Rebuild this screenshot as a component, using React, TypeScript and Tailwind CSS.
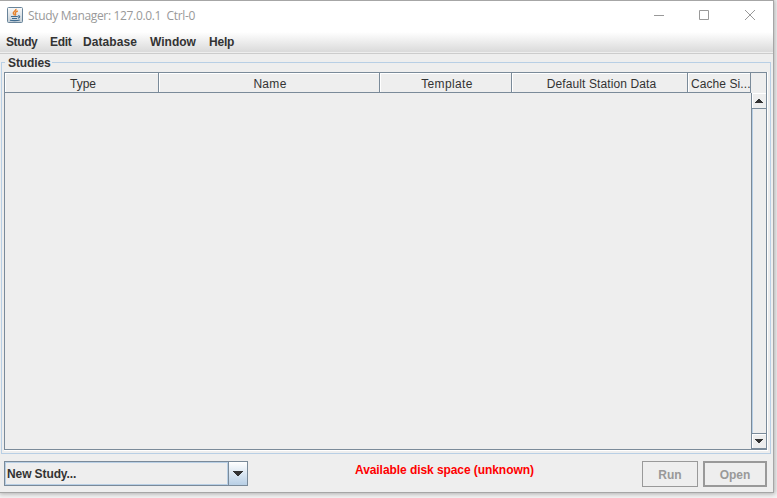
import React from "react";

const menus = [
  { label: "Study", cls: "w-[44px] tracking-[-0.4px]" },
  { label: "Edit", cls: "w-[33px] tracking-[-0.3px]" },
  { label: "Database", cls: "w-[67px] tracking-[0.08px]" },
  { label: "Window", cls: "w-[59px]" },
  { label: "Help", cls: "w-[40px] tracking-[-0.2px]" },
];

const columns = [
  { label: "Type", cls: "w-[154px]", text: "pl-[3px]" },
  { label: "Name", cls: "w-[221px]", text: "pl-[2px] tracking-[0.3px]" },
  { label: "Template", cls: "w-[132px]", text: "pl-[3px] tracking-[0.35px]" },
  { label: "Default Station Data", cls: "w-[176px]", text: "pl-[4px] tracking-[0.1px]" },
  { label: "Cache Si...", cls: "w-[63px]", text: "pl-[3px] tracking-[0.08px]" },
];

function JavaIcon() {
  return (
    <svg width="16" height="16" viewBox="0 0 16 16" className="block shrink-0">
      <defs>
        <linearGradient id="tile" x1="0" y1="0" x2="0" y2="1">
          <stop offset="0" stopColor="#fafafa" />
          <stop offset="1" stopColor="#c3ced6" />
        </linearGradient>
      </defs>
      <rect x="0.5" y="0.5" width="15" height="15" rx="1" fill="url(#tile)" stroke="#69849a" />
      <path d="M9 1.8C9.4 4 5.7 4.5 6.3 6.3C6.5 7 7.3 7.5 7.4 8.4M10.8 4C8.5 4.9 7.7 5.8 8.6 7C8.9 7.5 8.6 8 8 8.4" fill="none" stroke="#e8822a" strokeWidth="1.4" />
      <path d="M4 9.5H10.8M5 11.5H10M11 9C13.3 8.4 13.2 10.6 10.9 11.2M3 13.2C5 13.8 10.4 13.8 12.8 13" fill="none" stroke="#3f6c90" strokeWidth="1.1" />
    </svg>
  );
}

function Arrow({ up = false }: { up?: boolean }) {
  return (
    <svg width="8" height="4" viewBox="0 0 8 4" shapeRendering="crispEdges" className="block">
      <path d={up ? "M3 0h2v1h1v1h1v1h1v1H0V3h1V2h1V1h1z" : "M0 0h8v1H7v1H6v1H5v1H3V3H2V2H1V1H0z"} fill="#333" />
    </svg>
  );
}

function TitleBar() {
  return (
    <div className="flex h-[31px] shrink-0 items-center bg-white pl-[7px]">
      <div className="-mt-[3px]">
        <JavaIcon />
      </div>
      <span className="-mt-px ml-[5px] whitespace-pre font-['Open_Sans',sans-serif] text-[12px] leading-4 tracking-[-0.34px] text-[#999]">
        {"Study Manager: 127.0.0.1  Ctrl-0"}
      </span>
      <svg width="104" height="12" viewBox="0 0 104 12" className="-mt-[3px] ml-auto mr-[16px] block" fill="none" stroke="#999">
        <path d="M1 6.5h10M46.5 1.5h9v9h-9zM92 1l10 10M102 1L92 11" />
      </svg>
    </div>
  );
}

export default function App() {
  return (
    <div className="h-[498px] w-[777px] overflow-hidden bg-[#f5f5f5] font-['Liberation_Sans',Arial,sans-serif] text-[12px] leading-[14px] text-[#333]">
      <div className="flex h-[493px] w-[774px] flex-col border-y border-r border-[#a6a6a6] bg-[#eee] shadow-[0_0_5px_1px_#aaa]">
        <TitleBar />
        <nav className="flex h-[20px] shrink-0 bg-linear-to-b from-white to-[#dadada] pl-[6px] pt-[3px] font-bold">
          {menus.map((m) => (
            <span key={m.label} className={m.cls}>{m.label}</span>
          ))}
        </nav>
        <div className="h-[2px] shrink-0 border-b border-[#ccc]" />

        <fieldset className="ml-px mt-[2px] flex h-[398px] w-[770px] shrink-0 flex-col border border-[#b8cfe5] pl-[2px]">
          <legend className="ml-[1px] h-[13px] w-[47px] whitespace-nowrap pl-[3px] font-bold tracking-[-0.1px]">Studies</legend>
          <div className="mt-[3px] flex h-[379px] w-[764px] border-b border-r border-white">
            <div className="flex h-[378px] w-[763px] flex-col border border-[#7a8a99]">
              <div className="flex h-[20px] shrink-0">
                {columns.map((c) => (
                  <div key={c.label} className={`${c.cls} shrink-0 overflow-hidden whitespace-nowrap border-b border-r border-[#7a8a99] text-center shadow-[inset_1px_1px_0_#fff]`}>
                    <span className={`block pt-[4px] ${c.text}`}>{c.label}</span>
                  </div>
                ))}
              </div>
              <div className="flex flex-1">
                <div className="w-[746px]" />
                <div className="flex flex-1 flex-col border-l border-[#7a8a99]">
                  <div className="flex h-[16px] items-center border-b border-[#7a8a99] pl-[3px] shadow-[inset_1px_1px_0_#fff]">
                    <Arrow up />
                  </div>
                  <div className="flex-1 border-l border-[#b8cfe5]" />
                  <div className="flex h-[16px] items-center border-y border-[#7a8a99] pl-[3px] shadow-[inset_1px_1px_0_#fff]">
                    <Arrow />
                  </div>
                </div>
              </div>
            </div>
          </div>
        </fieldset>

        <footer className="flex flex-1 items-start pl-[4px] pt-[7px] font-bold">
          <div className="flex h-[25px] w-[244px] border border-[#7a8a99]">
            <div className="flex-1 border border-[#b8cfe5] pl-[1px] pt-[4px] tracking-[-0.1px]">New Study...</div>
            <div className="flex w-[19px] items-center justify-center border-l border-[#7a8a99] bg-linear-to-b from-white to-[#b8cfe5]">
              <svg width="10" height="5" viewBox="0 0 10 5" shapeRendering="crispEdges">
                <path d="M0 0h10v1H9v1H8v1H7v1H6v1H4V4H3V3H2V2H1V1H0z" fill="#333" />
              </svg>
            </div>
          </div>
          <span className="ml-[107px] mt-[2px] w-[287px] whitespace-nowrap tracking-[-0.07px] text-[#f00]">Available disk space (unknown)</span>
          <button className="h-[26px] w-[56px] border border-[#999] pt-px text-[#999]">Run</button>
          <button className="ml-[5px] h-[26px] w-[64px] border-2 border-[#999] pt-px text-[#999]">Open</button>
        </footer>
      </div>
    </div>
  );
}
